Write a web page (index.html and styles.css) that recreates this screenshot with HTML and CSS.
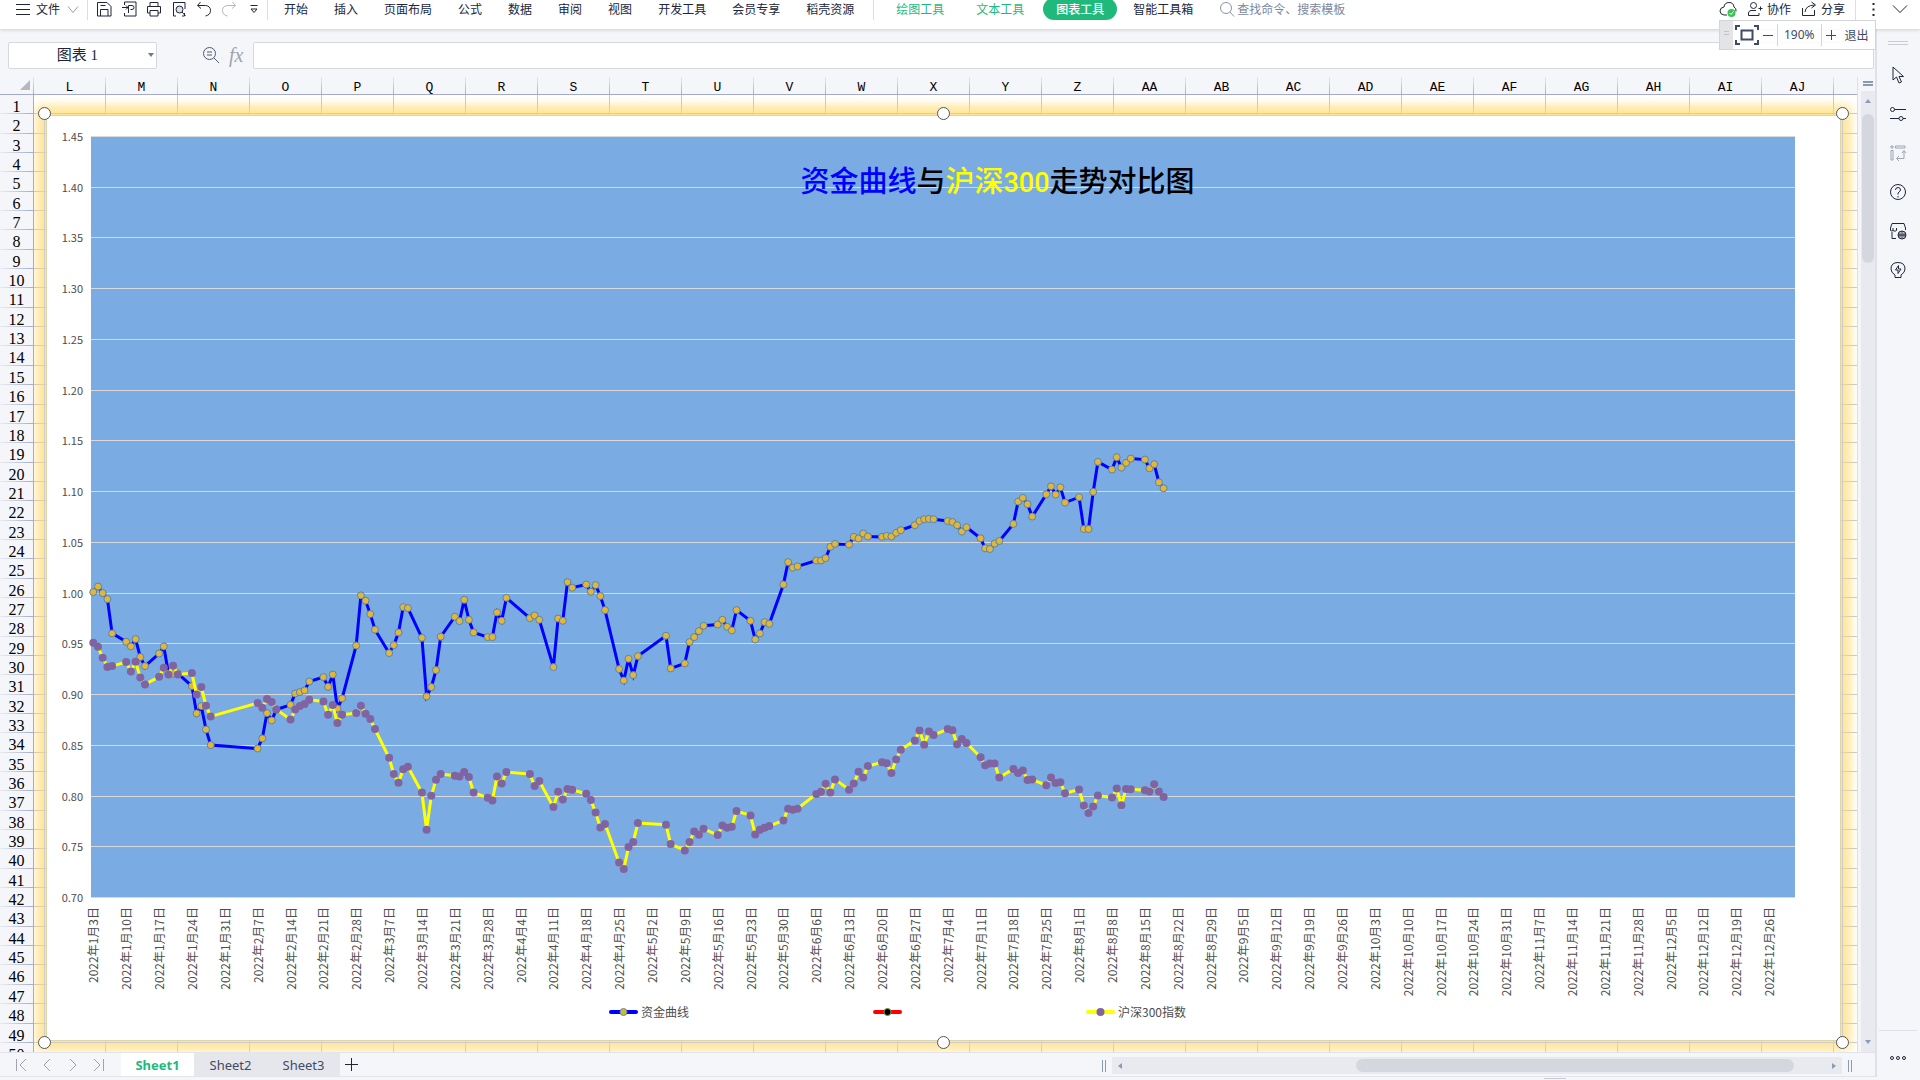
FILE: index.html
```html
<!DOCTYPE html>
<html lang="zh-CN">
<head>
<meta charset="utf-8">
<title>图表 1</title>
<link rel="stylesheet" href="styles.css">
</head>
<body>
<header class="menubar">
  <button class="file-btn"><svg class="ico" viewBox="0 0 16 16"><path d="M1 3.500h14M1 8.500h14M1 13.500h14"/></svg><span>文件</span><svg class="ico chev" viewBox="0 0 16 16"><path d="M3 5.500l5 6 5-6"/></svg></button>
  <span class="sep"></span>
  <div class="quick">
    <button aria-label="保存"><svg class="ico" viewBox="0 0 16 16"><path d="M1.500 1.500h9.500l4 4v9.500H1.500zM4.500 15V8.500h7.500V15M4.500 4.500h5"/></svg></button>
    <button aria-label="输出为PDF"><svg class="ico" viewBox="0 0 16 16"><path d="M3.500 4V1h11.500v14H3.500v-3M1 6.500h6M5 4.500l2 2-2 2M7.500 12V4.500h3.500q2 0 2 2t-2 2H9.500"/></svg></button>
    <button aria-label="打印"><svg class="ico" viewBox="0 0 16 16"><path d="M4 5V1.500h8V5M4 12H1.500V5.500h13V12H12M4 9.500h8V15H4z"/></svg></button>
    <button aria-label="打印预览"><svg class="ico" viewBox="0 0 16 16"><path d="M5 15H2.500V1.500H14V8M13.500 12v3H11"/><circle cx="8.500" cy="8.500" r="3.500" fill="#dde1e8"/><path d="M11 11l3.500 4"/></svg></button>
    <button aria-label="撤销"><svg class="ico" viewBox="0 0 16 16"><path d="M4.500 1L1.500 4.500l3.500 3M2 4.500h7.500q5 .5 5 5t-5 5.500"/></svg></button>
    <button aria-label="恢复"><svg class="ico faint" viewBox="0 0 16 16"><path d="M11.500 1l3 3.500-3.500 3M14 4.500H6.500q-5 .5-5 5t5 5.500"/></svg></button>
    <button aria-label="自定义"><svg class="ico" viewBox="0 0 16 16"><path d="M4.500 4.500h7M5 8l3 3.500L11 8z"/></svg></button>
  </div>
  <span class="sep"></span>
  <nav class="tabs-main">
    <button>开始</button><button>插入</button><button>页面布局</button><button>公式</button><button>数据</button><button>审阅</button><button>视图</button><button>开发工具</button><button>会员专享</button><button>稻壳资源</button>
  </nav>
  <span class="sep"></span>
  <nav class="tabs-tools">
    <button class="tool">绘图工具</button><button class="tool">文本工具</button><button class="active">图表工具</button><button>智能工具箱</button>
  </nav>
  <label class="search"><svg class="ico" viewBox="0 0 16 16"><circle cx="7" cy="7" r="5.500"/><path d="M11 11l4 4.500"/></svg><input type="text" placeholder="查找命令、搜索模板" aria-label="查找命令"></label>
  <div class="account">
    <button aria-label="云同步"><svg class="ico cloud" viewBox="0 0 18 16"><path d="M8 14H5q-4-.5-4-4t4-4q.5-4.500 5-4.500T15 6q2.500 1 2 4.500"/><circle cx="12.500" cy="12" r="4" fill="#37c455" stroke="none"/><path d="M10.500 12l1.500 1.500 2.500-3" stroke="#fff"/></svg></button>
    <button><svg class="ico" viewBox="0 0 16 16"><circle cx="6.500" cy="4.500" r="3"/><path d="M9 9.500H4Q1.500 10 1.500 12v2.500h10.500V12M11.500 7.500h4M13.500 5.500v4"/></svg>协作</button>
    <button><svg class="ico" viewBox="0 0 16 16"><path d="M1.500 7v7.500h12V9M4 11q.5-6.500 9.500-7M10.500 1l4 3-4 3"/></svg>分享</button>
    <span class="sep"></span>
    <button aria-label="更多"><svg class="ico dots" viewBox="0 0 16 16"><path d="M7.500 2v2M7.500 7.500v2M7.500 13v2"/></svg></button>
    <button aria-label="折叠"><svg class="ico" viewBox="0 0 16 16"><path d="M1 4.500l7 7 7-7"/></svg></button>
  </div>
</header>

<div class="zoombar">
  <span class="grip"></span>
  <button aria-label="适应窗口"><svg class="fit" viewBox="0 0 24 20"><path d="M1 5V1h4M19 1h4v4M23 15v4h-4M5 19H1v-4"/><path d="M6.500 5.500h11v9h-11z"/></svg></button>
  <button aria-label="缩小"><svg class="pm" viewBox="0 0 10 10"><path d="M0 5.500h10"/></svg></button>
  <span class="pct">190%</span>
  <button aria-label="放大"><svg class="pm" viewBox="0 0 10 10"><path d="M0 5.500h10M5.500 0v10"/></svg></button>
  <button class="exit">退出</button>
</div>

<div class="workspace">
  <main class="book">
    <div class="formula-bar">
      <div class="name-box"><input type="text" value="图表 1" aria-label="名称框"><button aria-label="名称列表"></button></div>
      <svg class="lens" viewBox="0 0 18 18"><circle cx="7.500" cy="7.500" r="6"/><path d="M12 12l5 5M5 6h5M5 9h5"/></svg>
      <span class="fx">fx</span>
      <input class="formula" type="text" aria-label="编辑栏">
    </div>
    <div class="sheet-row">
      <section class="sheet">
        <div class="col-heads" id="cols"><span class="corner"></span></div>
        <div class="grid">
          <div class="row-heads" id="heads"></div>
          <div class="cells">
            <div class="row-lines" id="lines"></div>
            <figure class="chart" id="chart">
              <svg class="plot" id="plot"></svg>
              <figcaption class="legend">
                <span><svg class="key" viewBox="0 0 29 10"><path d="M2 5h25" stroke="#00f"/><circle cx="14.500" cy="5" r="3.500" fill="#e0b232" stroke="#5b8a9c"/></svg>资金曲线</span>
                <span><svg class="key" viewBox="0 0 29 10"><path d="M2 5h25" stroke="#f00"/><circle cx="14.500" cy="5" r="3.500" fill="#000" stroke="#77933c"/></svg></span>
                <span><svg class="key" viewBox="0 0 29 10"><path d="M2 5h25" stroke="#ff0"/><circle cx="14.500" cy="5" r="4" fill="#8064a2" stroke="none"/></svg>沪深300指数</span>
              </figcaption>
              <i class="handle tl"></i><i class="handle tc"></i><i class="handle tr"></i>
              <i class="handle bl"></i><i class="handle bc"></i><i class="handle br"></i>
            </figure>
          </div>
        </div>
      </section>
      <div class="vscroll">
        <span class="split"></span>
        <div class="vtrack"><i class="arrow up"></i><i class="vthumb"></i><i class="arrow down"></i></div>
      </div>
    </div>
    <footer class="sheet-tabs">
      <div class="pager">
        <button aria-label="第一张"><svg class="ico" viewBox="0 0 16 16"><path d="M3.500 2v12M13 2L7 8l6 6"/></svg></button>
        <button aria-label="上一张"><svg class="ico" viewBox="0 0 16 16"><path d="M11 2L5 8l6 6"/></svg></button>
        <button aria-label="下一张"><svg class="ico" viewBox="0 0 16 16"><path d="M5 2l6 6-6 6"/></svg></button>
        <button aria-label="最后一张"><svg class="ico" viewBox="0 0 16 16"><path d="M3 2l6 6-6 6M12.500 2v12"/></svg></button>
      </div>
      <button class="tab current">Sheet1</button><button class="tab">Sheet2</button><button class="tab">Sheet3</button>
      <button class="add" aria-label="新建工作表"><svg class="add-ico" viewBox="0 0 13 13"><path d="M0 6.500h13M6.500 0v13"/></svg></button>
      <div class="hscroll">
        <i class="bars"></i>
        <div class="htrack"><i class="arrow left"></i><i class="hthumb"></i><i class="arrow right"></i></div>
        <i class="bars"></i>
      </div>
    </footer>
  </main>
  <aside class="side">
    <span class="side-grip"></span>
    <button aria-label="选择"><svg viewBox="0 0 18 18"><path d="M4 1v13l3.500-3 2.500 6 2.500-1-2.500-5.500h4.500z"/></svg></button>
    <button aria-label="属性"><svg viewBox="0 0 18 18"><circle cx="3.500" cy="4.500" r="2"/><path d="M5.500 4.500H17M1 13.500h9M14 13.500h3"/><circle cx="12" cy="13.500" r="2"/></svg></button>
    <button class="off" aria-label="分析"><svg viewBox="0 0 18 18"><path d="M2 2h2v2H2zM6.500 2H16v2H6.500zM2 6.500h2V16H2zM8 14.500h7V7M13 9l2-2.500L17 9M10 12l-2.500 2.500L10 17"/></svg></button>
    <button aria-label="帮助"><svg viewBox="0 0 18 18"><circle cx="9" cy="9" r="7.500"/><path d="M6.500 7q0-2.500 2.500-2.500T11.500 7Q11.500 8 9 10v1.500M9 13v1.500"/></svg></button>
    <button aria-label="素材"><svg viewBox="0 0 18 18"><path d="M1.500 6L3 1.500h12L16.500 6v2M1.500 6v2.500q1.500 1 2.500 0V6M4 8.500q2 1.500 3.500 0V6M3 10v6.500h4"/><circle cx="13" cy="13" r="4"/><path d="M9 13h8M13 9v8M11 10.500v5M15 10.500v5"/></svg></button>
    <button aria-label="灵感"><svg viewBox="0 0 18 18"><path d="M6 14Q2 11.500 2 8q0-6.500 7-6.500T16 8q0 3.500-4 6v2.500H6zM9.500 4.500L6.500 9h2.500v3.500l3-4.500H9.500z"/></svg></button>
    <button class="more" aria-label="更多"><svg viewBox="0 0 18 18"><circle cx="3" cy="9" r="1.500"/><circle cx="9" cy="9" r="1.500"/><circle cx="15" cy="9" r="1.500"/></svg></button>
  </aside>
</div>
<div class="status"><i></i></div>
<script src="chart.js"></script>
</body>
</html>
```
FILE: styles.css
```css
* { box-sizing: border-box; }
body {
  margin: 0;
  height: 100vh;
  display: flex;
  flex-direction: column;
  overflow: hidden;
  background: #f5f6f9;
  color: #20263a;
  font: 12px/18px "Noto Sans CJK SC", sans-serif;
}
button, input { font: inherit; color: inherit; border: 0; background: none; padding: 0; margin: 0; outline: 0; }
button { display: flex; align-items: center; justify-content: center; white-space: nowrap; }
svg { display: block; fill: none; stroke: currentColor; }
.ico { width: 16px; height: 16px; flex: none; }

/* menu bar */
.menubar {
  position: relative;
  z-index: 2;
  flex: none;
  height: 29px;
  padding: 0 12px 11px 15px;
  display: flex;
  align-items: center;
  background: #fff;
  box-shadow: 0 1px 4px rgba(0, 0, 0, .16);
}
.sep { flex: none; width: 1px; height: 22px; background: #dcdee3; }
.file-btn { gap: 5px; margin-right: 6px; }
.chev { color: #9a9fab; }
.quick { display: flex; gap: 9px; padding: 0 5px 0 8px; }
.faint { color: #b3b7c0; }
.tabs-main { display: flex; gap: 26px; padding: 0 19px 0 16px; }
.tabs-tools { display: flex; align-items: center; gap: 32px; padding: 0 26px 0 22px; }
.tool { color: #1fba7b; }
.active { height: 22px; padding: 0 13px; margin: 0 -16px 0 -13px; border-radius: 11px; background: #1fba7b; color: #fff; font-weight: 500; }
.search { display: flex; align-items: center; color: #8a94a8; }
.search input { width: 120px; margin-left: 2px; }
.search input::placeholder { color: #7d879c; opacity: 1; }
.account { display: flex; align-items: center; gap: 10px; margin-left: auto; }
.account button { gap: 4px; }
.cloud { width: 18px; }
.dots { stroke-width: 2; }

/* floating zoom control */
.zoombar {
  position: absolute;
  z-index: 3;
  top: 20px;
  right: 44px;
  height: 30px;
  width: 157px;
  display: flex;
  align-items: center;
  background: rgba(255, 255, 255, .9);
  border: 1px solid #d3d5da;
  color: #3f4a63;
}
.grip { width: 13px; height: 28px; margin-right: 2px; background: linear-gradient(#c2c4c8, #c2c4c8) 4px 10px / 5px 1px no-repeat, linear-gradient(#c2c4c8, #c2c4c8) 4px 13px / 5px 1px no-repeat, #e2e4e6; }
.fit { width: 24px; height: 20px; stroke-width: 2; }
.pm { width: 10px; height: 10px; margin: 0 4px; }
.pct { padding: 0 6px; border: solid #d3d5da; border-width: 0 1px; font: 12px/22px "Noto Sans", sans-serif; }
.exit { margin-left: 5px; }

/* workspace */
.workspace { flex: 1; min-height: 0; display: flex; }
.book { flex: 1; min-width: 0; display: flex; flex-direction: column; border-right: 2px solid #dfe1e8; }
.formula-bar { flex: none; height: 48px; padding: 4px 1px 0 8px; display: flex; align-items: center; }
.name-box { display: flex; width: 149px; height: 27px; background: #fff; border: 1px solid #d6d8dd; border-radius: 2px; }
.name-box input { flex: 1; min-width: 0; text-align: center; font: 15px/24px "Liberation Serif", "Noto Sans CJK SC", serif; }
.name-box button { width: 10px; }
.name-box button::after { content: ""; border: 3px solid transparent; border-top: 4px solid #6b7a94; border-bottom: 0; }
.lens { width: 18px; height: 18px; margin: 0 9px 0 45px; color: #4d5a73; }
.fx { width: 24px; color: #a0a4ad; font: italic 20px/24px "Liberation Serif", serif; }
.formula { flex: 1; height: 27px; background: #fff; border: 1px solid #d6d8dd; border-radius: 2px; }

.sheet-row { flex: 1; min-height: 0; display: flex; }
.sheet { flex: 1; min-width: 0; display: flex; flex-direction: column; border-right: 1px solid #dcdfe6; }
.col-heads { flex: none; display: flex; height: 18px; overflow: hidden; border-bottom: 1px solid #a3abc9; font: 13px/22px "Liberation Mono", monospace; color: #000; }
.col-heads span { flex: none; width: 72px; text-align: center; border-right: 1px solid; border-image: linear-gradient(#eceef3, #a3abc9) 1; }
.col-heads .corner { width: 34px; position: relative; }
.corner::after { content: ""; position: absolute; right: 3px; bottom: 4px; border: 5px solid; border-color: transparent #b6b8bd #b6b8bd transparent; }
.grid { flex: 1; min-height: 0; display: flex; overflow: hidden; }
.row-heads, .row-lines { display: flex; flex-direction: column; }
.row-heads { flex: none; width: 34px; border-right: 1px solid #a3abc9; font: 16px/23px "Liberation Serif", serif; color: #000; text-align: center; }
.row-heads span, .row-lines span { flex: 1 1 0; min-height: 0; overflow: hidden; border-bottom: 1px solid; }
.row-heads span { border-image: linear-gradient(90deg, #eceef3, #a3abc9) 1; }
.row-lines span { border-color: #c2c8d8; }
.row-heads span:last-child, .row-lines span:last-child { flex: 0 0 9px; border-bottom: 0; }
.cells { flex: 1; position: relative; overflow: hidden; background: repeating-linear-gradient(90deg, #fff 0 71px, #c2c8d8 71px 72px); }
.row-lines { height: 100%; }

/* chart object floating over the cells */
.chart {
  position: absolute;
  inset: 21px 17px 12px 13px;
  margin: 0;
  display: flex;
  flex-direction: column;
  background: #fff;
  outline: 1px solid #c8ccd0;
  outline-offset: 2px;
  box-shadow: 0 0 0 1px #e3d3a0, 0 0 9px 11px rgba(255, 217, 102, .66);
}
.plot { flex: 1; min-height: 0; width: 100%; overflow: visible; }
.plot text { stroke: none; fill: #4d4d4d; font-size: 12px; }
.plot .value { font-size: 11px; }
.plot .title { font-size: 29px; font-weight: 500; fill: #000; }
.plot .title .num { font-family: Roboto, sans-serif; font-weight: 500; font-size: 27px; }
.plot .t-blue { fill: #00f; }
.plot .t-yellow { fill: #ff0; }
.area { fill: #7aabe3; stroke: none; }
.gridline { stroke: #d9d9d9; shape-rendering: crispEdges; }
.fund { stroke: #00f; stroke-width: 3; }
.index { stroke: #ff0; stroke-width: 3; }
.fund-dot { fill: #e2b63a; stroke: #5b86a0; }
.index-dot { fill: #8064a2; stroke: none; }
.legend { flex: none; height: 48px; padding: 0 92px 8px 0; display: flex; justify-content: center; align-items: center; gap: 184px; color: #4d4d4d; }
.legend span { display: flex; align-items: center; gap: 3px; }
.key { width: 29px; height: 10px; }
.key path { stroke-width: 4; stroke-linecap: round; }
.handle { position: absolute; width: 13px; height: 13px; border: 1px solid #555; border-radius: 50%; background: #fff; }
.tl, .tc, .tr { top: -9px; }
.bl, .bc, .br { bottom: -9px; }
.tl, .bl { left: -9px; }
.tr, .br { right: -9px; }
.tc, .bc { left: calc(50% - 7px); }

/* scroll bars */
.vscroll { width: 17px; padding: 0 0 0 3px; display: flex; flex-direction: column; }
.split { width: 10px; height: 5px; margin: 4px 0 5px 2px; border: solid #8c9bb3; border-width: 2px 0; }
.vtrack { flex: 1; display: flex; flex-direction: column; align-items: center; padding: 8px 0; background: #e9eaf0; }
.vthumb { width: 12px; height: 149px; margin: 11px 0 auto; border-radius: 6px; background: #d4d7de; }
.arrow { border: 3px solid transparent; }
.up { border-top: 0; border-bottom: 4px solid #8c9bb3; }
.down { border-bottom: 0; border-top: 4px solid #8c9bb3; }
.left { border-left: 0; border-right: 4px solid #8c9bb3; }
.right { border-right: 0; border-left: 4px solid #8c9bb3; }

.sheet-tabs { flex: none; height: 25px; display: flex; align-items: stretch; border: solid #e2e4ea; border-width: 1px 0; color: #3f4a63; font: 13px/22px "Noto Sans", sans-serif; }
.pager { display: flex; gap: 10px; padding: 0 14px 0 13px; color: #9ea3ae; }
.tab { width: 73px; background: #e6e7ed; }
.current { background: #fff; color: #1fba7b; font-weight: 700; }
.add { width: 22px; color: #20263a; }
.add-ico { width: 13px; height: 13px; }
.hscroll { margin: 4px 23px 2px auto; width: 40%; display: flex; align-items: center; gap: 6px; }
.bars { width: 4px; height: 12px; border: solid #8c9bb3; border-width: 0 1px; }
.htrack { flex: 1; height: 17px; padding: 0 6px; display: flex; align-items: center; background: #e9eaf0; }
.hthumb { width: 61%; height: 13px; margin: 0 38px 0 auto; border-radius: 7px; background: #d4d7de; }

/* task pane */
.side { flex: none; width: 43px; padding: 12px 1px 10px 0; display: flex; flex-direction: column; align-items: center; gap: 21px; color: #20263a; }
.side svg { width: 18px; height: 18px; }
.side-grip { width: 20px; height: 4px; border: solid #c9ccd3; border-width: 1px 0; }
.off { color: #a0a4b0; }
.side .more { width: 38px; margin-top: auto; padding-top: 18px; border-top: 1px solid #dfe1e8; }
.status { flex: none; height: 3px; display: flex; justify-content: center; }
.status i { width: 22px; height: 1px; margin: 1px 0 0 1190px; background: #c9ccd3; }
```
FILE: chart.js
```js
const SVG = "http://www.w3.org/2000/svg";

// Each entry: first day offset from 3 January, then values of consecutive days.
const fund = [
  [0, 1.0005, 1.006, .9995, .9936, .9598], [7, .9515, .947, .9542, .9364, .9276],
  [14, .94, .947, .92, .92, .9203], [21, .9079, .8809, .8881, .8651, .8497],
  [35, .8464, .8563, .8812, .874, .8848], [42, .8894, .9006, .9019, .9036, .9124],
  [49, .9167, .9072, .9193, .8858, .8957], [56, .9479, .9972, .992, .9788, .9634],
  [63, .9404, .9483, .9607, .9857, .9847], [70, .9555, .8977, .9069, .9236, .9565],
  [77, .9762, .9719, .9929, .9732, .9607], [84, .9561, .9561, .9805, .9722, .9949],
  [93, .9749, .9775, .9732], [98, .9266, .9745, .9722, 1.0103, 1.0048],
  [105, 1.008, 1.0008, 1.0074, .9966, .9828], [112, .9246, .9134, .9348, .9187, .9374],
  [122, .9575, .9253], [126, .9302, .9512, .9561, .9621, .9673],
  [133, .9686, .9732, .9663, .9627, .9828], [140, .9722, .9538, .9598, .9709, .9693],
  [147, 1.008, 1.0301, 1.0245, 1.0258], [154, 1.0316, 1.0316, 1.0339, 1.0451, 1.048],
  [161, 1.0474, 1.0549, 1.0533, 1.0582, 1.0553], [168, 1.0549, 1.0559, 1.0553, 1.0589, 1.0615],
  [175, 1.0664, 1.0706, 1.0723, 1.0726, 1.0723], [182, 1.0706, 1.0696, 1.0664, 1.0601, 1.0644],
  [189, 1.0535, 1.0437, 1.043, 1.0483, 1.0509], [196, 1.0677, 1.0897, 1.0933, 1.0871, 1.0749],
  [203, 1.0969, 1.1048, 1.0966, 1.1038, 1.0887], [210, 1.094, 1.0627, 1.0627, 1.0992, 1.1288],
  [217, 1.1212, 1.1334, 1.1232, 1.1278, 1.1321], [224, 1.1311, 1.1225, 1.1265, 1.1087, 1.1028]
];
const index300 = [
  [0, .9506, .9466, .9358, .9266, .9276], [7, .9315, .9223, .9318, .9164, .9095],
  [14, .917, .9259, .9193, .9279, .9193], [21, .9207, .8996, .9069, .8885, .878],
  [35, .8911, .8865, .895, .8921, .8848], [42, .875, .8848, .8881, .8901, .8944],
  [49, .8927, .8796, .8891, .8714, .8796], [56, .8812, .8885, .8806, .8753, .8655],
  [63, .8372, .8211, .8126, .826, .8283], [70, .803, .7663, .7998, .8155, .8211],
  [77, .8195, .8188, .8231, .8182, .803], [84, .7978, .7952, .8188, .8119, .8231],
  [93, .8211, .8093, .8142], [98, .7886, .8037, .7962, .8063, .8057],
  [105, .8017, .7955, .7833, .7686, .7719], [112, .7341, .7275, .7492, .7541, .7728],
  [122, .7712, .7521], [126, .7459, .7541, .7646, .7613, .7672],
  [133, .761, .7705, .7682, .7692, .7847], [140, .7804, .7617, .7663, .7682, .7699],
  [147, .7755, .787, .786, .787], [154, .8014, .8037, .8116, .803, .8159],
  [161, .8057, .8119, .8234, .8178, .829], [168, .8329, .8319, .8221, .8356, .8451],
  [175, .8543, .8642, .85, .8632, .8596], [182, .8656, .8643, .8505, .8558, .8518],
  [189, .8377, .8298, .8315, .8315, .8177], [196, .8262, .8223, .8246, .8154, .8157],
  [203, .8101, .8177, .8124, .8131, .8022], [210, .8058, .7901, .7829, .7891, .7999],
  [217, .798, .8069, .7904, .8065, .8062], [224, .8052, .8039, .8111, .8039, .7987]
];

function fillSheet() {
  const cols = document.getElementById("cols");
  for (let c = 11; c < 36; c++) {
    const s = document.createElement("span");
    s.textContent = c < 26 ? String.fromCharCode(65 + c) : "A" + String.fromCharCode(39 + c);
    cols.append(s);
  }
  for (let r = 1; r <= 50; r++) {
    const h = document.createElement("span");
    h.textContent = r;
    document.getElementById("heads").append(h);
    document.getElementById("lines").append(document.createElement("span"));
  }
}

function add(parent, tag, attrs, text) {
  const e = document.createElementNS(SVG, tag);
  for (const k in attrs) e.setAttribute(k, attrs[k]);
  if (text) e.textContent = text;
  parent.append(e);
  return e;
}

function drawSeries(svg, data, name, r, x, y) {
  const pts = data.flatMap(([d, ...v]) => v.map((n, i) => [x(d + i), y(n)]));
  add(svg, "polyline", { class: name, points: pts.map(p => p.map(n => n.toFixed(1)).join()).join(" ") });
  for (const [cx, cy] of pts) add(svg, "circle", { class: name + "-dot", cx: cx.toFixed(1), cy: cy.toFixed(1), r });
}

function draw() {
  const svg = document.getElementById("plot");
  svg.replaceChildren();
  const box = svg.getBoundingClientRect();
  const left = 44, top = 20, w = box.width - 89, h = box.height - 95 - top;
  const x = d => left + (d + .5) * w / 363;
  const y = v => top + (1.45 - v) / .75 * h;
  add(svg, "rect", { class: "area", x: left, y: top, width: w, height: h });
  for (let i = 0; i <= 15; i++) {
    const v = 1.45 - i * .05, gy = Math.round(y(v)) + .5;
    add(svg, "line", { class: "gridline", x1: left, x2: left + w, y1: gy, y2: gy });
    add(svg, "text", { class: "value", x: left - 8, y: gy + 4, "text-anchor": "end" }, v.toFixed(2));
  }
  for (let d = 0; d < 363; d += 7) {
    const t = new Date(Date.UTC(2022, 0, 3 + d));
    const label = `2022年${t.getUTCMonth() + 1}月${t.getUTCDate()}日`;
    add(svg, "text", { transform: `translate(${Math.round(x(d)) + 5} ${top + h + 10}) rotate(-90)`, "text-anchor": "end" }, label);
  }
  drawSeries(svg, fund, "fund", 3.5, x, y);
  drawSeries(svg, index300, "index", 4, x, y);
  const title = add(svg, "text", { class: "title", x: left + w * .532, y: top + 56, "text-anchor": "middle" });
  add(title, "tspan", { class: "t-blue" }, "资金曲线");
  add(title, "tspan", {}, "与");
  add(title, "tspan", { class: "t-yellow" }, "沪深");
  add(title, "tspan", { class: "t-yellow num" }, "300");
  add(title, "tspan", {}, "走势对比图");
}

fillSheet();
draw();
addEventListener("resize", draw);
```
